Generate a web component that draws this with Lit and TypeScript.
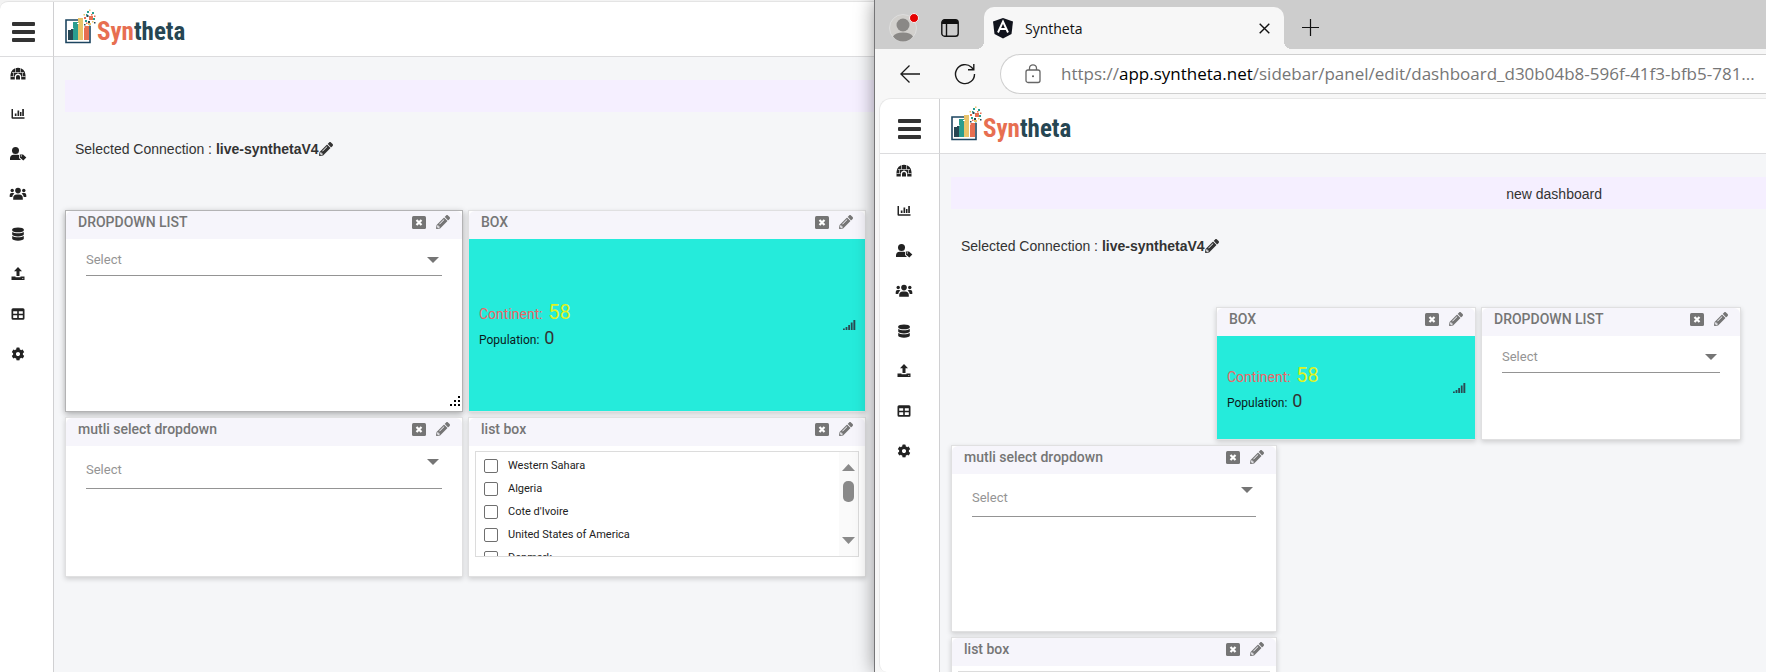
import { LitElement, html, css, svg, nothing } from "lit";
import { customElement, property } from "lit/decorators.js";
import { classMap } from "lit/directives/class-map.js";

type Kind = "dropdown" | "box" | "multi" | "list";

const PENCIL =
  "M497.9 142.1l-46.1 46.1c-4.7 4.7-12.3 4.7-17 0l-111-111c-4.7-4.7-4.7-12.3 0-17l46.1-46.1c18.7-18.7 49.1-18.7 67.9 0l60.1 60.1c18.8 18.7 18.8 49.1 0 67.9zM284.2 99.8L21.6 362.4.4 483.9c-2.9 16.4 11.4 30.6 27.8 27.8l121.5-21.3 262.6-262.6c4.7-4.7 4.7-12.3 0-17l-111-111c-4.8-4.7-12.4-4.7-17.1 0zM124.1 339.9c-5.5-5.5-5.5-14.3 0-19.8l154-154c5.5-5.5 14.3-5.5 19.8 0s5.5 14.3 0 19.8l-154 154c-5.5 5.5-14.3 5.5-19.8 0zM88 424h48v36.3l-64.5 11.3-31.1-31.1L51.7 376H88v48z";

const pencil = (size: number) => html`<svg width=${size} height=${size} viewBox="0 0 512 512" fill="currentColor" aria-hidden="true"><path d=${PENCIL} /></svg>`;

const NAV = [
  {
    name: "Home",
    art: svg`<path d="M1.5 14.5V10A7.2 7 0 0 1 16.500 10V14.500H12.200V12A3.200 3.200 0 0 0 5.800 12V14.500Z"/><path d="M7 14.500V12a2 2 0 0 1 4 0v2.500z"/><g stroke="#fff" stroke-width=".6" fill="none"><path d="M1.500 11.500H5.500M12.500 11.500H16.500M2.800 7.500H15.200M6.500 3v4.500M11.500 3v4.500M9 7.500v1.500M4.500 7.500v4M13.500 7.500v4"/></g>`,
  },
  {
    name: "Charts",
    art: svg`<path d="M2.500 4h1.500v8.300h11.500v1.500h-12a1 1 0 0 1-1-1zM5.800 8.500h1.700v2.500H5.800zM8.500 5.500h1.700V11H8.500zM11 7h1.500v4H11zM13.200 4h1.700v7h-1.700z"/>`,
  },
  {
    name: "User tags",
    art: svg`<circle cx="6.500" cy="5.500" r="3.500"/><path d="M1 15v-1.500A3.800 3.800 0 0 1 4.800 9.700H8.500A3.500 3.500 0 0 1 10 10v3l2 2z"/><path d="M10.800 9.500h3.200l3.300 3-3 3-3.500-3z"/><circle cx="12.300" cy="10.900" r=".6" fill="#fff"/>`,
  },
  {
    name: "Groups",
    art: svg`<circle cx="9" cy="5.600" r="2.800"/><circle cx="3.200" cy="5.500" r="1.700"/><circle cx="14.800" cy="5.500" r="1.700"/><path d="M4.200 14.800v-1.700A3.600 3.600 0 0 1 7.800 9.500h2.400a3.600 3.600 0 0 1 3.600 3.600v1.700zM.700 12V10a1.900 1.900 0 0 1 1.900-1.900h1.500a2 2 0 0 1 1.300.500A5 5 0 0 0 3.200 12zM17.300 12V10a1.900 1.900 0 0 0-1.900-1.900h-1.500a2 2 0 0 0-1.300.500A5 5 0 0 1 14.800 12z"/>`,
  },
  {
    name: "Databases",
    art: svg`<path transform="translate(3.200 2.400) scale(.0259)" d="M448 73.143v45.714C448 159.143 347.667 192 224 192S0 159.143 0 118.857V73.143C0 32.857 100.333 0 224 0s224 32.857 224 73.143zM448 176v102.857C448 319.143 347.667 352 224 352S0 319.143 0 278.857V176c48.125 33.143 136.208 48.572 224 48.572S399.874 209.143 448 176zm0 160v102.857C448 479.143 347.667 512 224 512S0 479.143 0 438.857V336c48.125 33.143 136.208 48.572 224 48.572S399.874 369.143 448 336z"/>`,
  },
  {
    name: "Upload",
    art: svg`<path d="M9 2l4 4.300h-2.500V11h-3V6.300H5z"/><path d="M2.500 11.500h4v.800h5v-.800h4v3.500h-13z"/><circle cx="13.800" cy="13.400" r=".5" fill="#fff"/>`,
  },
  {
    name: "Tables",
    art: svg`<path fill-rule="evenodd" d="M4 3.200h10a1.500 1.500 0 0 1 1.500 1.500v8.600a1.500 1.500 0 0 1-1.500 1.500H4a1.500 1.500 0 0 1-1.500-1.500V4.700A1.500 1.500 0 0 1 4 3.200zM4.200 6.300v2.500h4V6.300zM9.800 6.300v2.500h4V6.300zM4.200 10.300v2.700h4v-2.700zM9.800 10.300v2.700h4v-2.700z"/>`,
  },
  {
    name: "Settings",
    art: svg`<path transform="translate(2.400 2.400) scale(.0258)" d="M487.4 315.7l-42.6-24.6c4.3-23.2 4.3-47 0-70.2l42.6-24.6c4.9-2.8 7.1-8.6 5.5-14-11.1-35.6-30-67.8-54.7-94.6-3.8-4.1-10-5.1-14.8-2.3L380.8 110c-17.9-15.4-38.5-27.3-60.8-35.1V25.8c0-5.6-3.9-10.5-9.4-11.7-36.7-8.2-74.3-7.8-109.2 0-5.5 1.2-9.4 6.1-9.4 11.7V75c-22.2 7.900-42.8 19.8-60.8 35.1L88.700 85.500c-4.9-2.8-11-1.9-14.8 2.3-24.7 26.7-43.6 58.9-54.7 94.6-1.7 5.4.6 11.2 5.5 14L67.300 221c-4.3 23.2-4.3 47 0 70.2l-42.6 24.6c-4.900 2.8-7.1 8.6-5.5 14 11.1 35.600 30 67.8 54.7 94.6 3.8 4.1 10 5.1 14.8 2.3l42.6-24.6c17.9 15.4 38.5 27.3 60.8 35.1v49.2c0 5.6 3.900 10.5 9.4 11.7 36.7 8.2 74.3 7.8 109.2 0 5.5-1.2 9.4-6.1 9.4-11.7v-49.2c22.2-7.9 42.8-19.8 60.8-35.1l42.6 24.6c4.9 2.8 11 1.9 14.8-2.3 24.7-26.7 43.6-58.9 54.7-94.6 1.5-5.5-.7-11.3-5.6-14.1zM256 336c-44.1 0-80-35.9-80-80s35.9-80 80-80 80 35.9 80 80-35.9 80-80 80z"/>`,
  },
];

const COUNTRIES = ["Western Sahara", "Algeria", "Cote d'Ivoire", "United States of America", "Denmark"];

@customElement("widget-card")
class WidgetCard extends LitElement {
  @property() heading = "";
  @property() kind: Kind = "dropdown";
  @property({ type: Boolean }) active = false;

  static styles = css`
    :host {
      display: grid;
      min-width: 0;
      font-family: Roboto, "Liberation Sans", sans-serif;
    }
    * {
      box-sizing: border-box;
    }
    .card {
      position: relative;
      display: flex;
      flex-direction: column;
      min-height: 0;
      background: #fff;
      box-shadow: 0 0 0 1px #e0e0e1, 0 2px 5px 1px rgba(0, 0, 0, 0.17);
    }
    .card.active {
      box-shadow: 0 0 0 1px #b3b3b4, 0 2px 6px 1px rgba(0, 0, 0, 0.32);
    }
    .head {
      display: flex;
      align-items: center;
      flex: none;
      gap: 10px;
      height: 28px;
      padding: 0 12px 6px;
      background: #f6f5fb;
      border-radius: 6px 6px 0 0;
      color: #757575;
    }
    .title {
      flex: 1;
      font-size: 14px;
      line-height: 20px;
      font-weight: 500;
      white-space: nowrap;
    }
    button {
      display: flex;
      padding: 0;
      border: 0;
      background: none;
      color: inherit;
    }
    .field {
      display: grid;
      margin: 0 20px;
    }
    select {
      grid-area: 1 / 1;
      height: 37px;
      padding: 4px 0 0;
      appearance: none;
      border: 0;
      border-bottom: 1px solid #949494;
      border-radius: 0;
      background: none;
      color: #949494;
      font: 13px Roboto, sans-serif;
    }
    .arrow {
      grid-area: 1 / 1;
      place-self: center end;
      margin: 4px 3px 0 0;
      pointer-events: none;
    }
    .multi select {
      height: 43px;
    }
    .multi .arrow {
      align-self: start;
      margin-top: 13px;
    }
    .grip {
      position: absolute;
      right: 2px;
      bottom: 5px;
    }
    .box {
      flex: 1;
      display: flex;
      align-items: center;
      justify-content: space-between;
      padding: 2px 9px 0 10px;
      background: #25ebdb;
      color: #000;
    }
    .line {
      margin: 0;
      font-size: 12px;
      line-height: 24px;
      color: #0b1a1a;
    }
    .num {
      margin-left: 2px;
      font-size: 18px;
      color: #333;
    }
    .first {
      font-size: 14px;
      color: #ec6565;
    }
    .first .num {
      font-size: 20px;
      color: #dff21f;
    }
    .list {
      display: grid;
      grid-template-columns: 1fr 19px;
      height: 106px;
      margin: 5px 6px 0;
      border: 1px solid #dcdcdc;
      overflow: hidden;
    }
    .items {
      margin: 0;
      padding: 2px 0 0 8px;
      list-style: none;
      min-height: 0;
    }
    .item {
      display: flex;
      align-items: center;
      gap: 10px;
      height: 23px;
      font-size: 11px;
      color: #222;
    }
    .item input {
      width: 14px;
      height: 14px;
      margin: 0;
      appearance: none;
      border: 1px solid #6f6f6f;
      border-radius: 2px;
      background: #fff;
    }
    .scroll {
      display: flex;
      flex-direction: column;
      align-items: center;
      padding: 12px 0;
      background: #fafafa;
    }
    .thumb {
      width: 11px;
      height: 21px;
      margin: 10px 0 auto;
      border-radius: 5px;
      background: #8a8a8a;
    }
  `;

  private body() {
    switch (this.kind) {
      case "box":
        return html`<div class="box">
          <div>
            <p class="line first">Continent: <span class="num">58</span></p>
            <p class="line">Population: <span class="num">0</span></p>
          </div>
          <svg width="13" height="14" viewBox="0 0 13 14" fill="#2a4a52" aria-hidden="true">
            <path d="M0 9.500h1.800V11H0zM2.600 8h1.800v3H2.600zM5.200 6H7v5H5.200zM7.800 3.500h1.800V11H7.800zM10.400 1h1.900v10h-1.900z" />
          </svg>
        </div>`;
      case "list":
        return html`<div class="list">
          <ul class="items">
            ${COUNTRIES.map(
              (c, i) => html`<li class="item"><input type="checkbox" id="c${i}" /><label for="c${i}">${c}</label></li>`
            )}
          </ul>
          <div class="scroll" aria-hidden="true">
            <svg width="13" height="7"><path d="M0 7L6.500 0 13 7z" fill="#8a8a8a" /></svg>
            <div class="thumb"></div>
            <svg width="13" height="7"><path d="M0 0L6.500 7 13 0z" fill="#8a8a8a" /></svg>
          </div>
        </div>`;
      default:
        return html`<div class=${classMap({ field: true, multi: this.kind === "multi" })}>
          <select id="pick"><option>Select</option></select>
          <svg class="arrow" width="12" height="6" aria-hidden="true"><path d="M0 0H12L6 6z" fill="#757575" /></svg>
        </div>`;
    }
  }

  render() {
    const picks = this.kind === "dropdown" || this.kind === "multi";
    return html`<section class=${classMap({ card: true, active: this.active })}>
      <div class="head">
        ${picks
          ? html`<label class="title" for="pick">${this.heading}</label>`
          : html`<span class="title">${this.heading}</span>`}
        <button aria-label="Remove widget">
          <svg width="14" height="13" viewBox="0 0 14 13" aria-hidden="true">
            <rect width="14" height="13" rx="1.500" fill="currentColor" />
            <path d="M4.500 4l5 5M9.500 4l-5 5" stroke="#fff" stroke-width="2.200" />
          </svg>
        </button>
        <button aria-label="Edit widget">${pencil(14)}</button>
      </div>
      ${this.body()}
      ${this.active
        ? html`<svg class="grip" width="10" height="10" aria-hidden="true">
            <path d="M8 0h2v2H8zM4 4h2v2H4zM8 4h2v2H8zM0 8h2v2H0zM4 8h2v2H4zM8 8h2v2H8z" />
          </svg>`
        : nothing}
    </section>`;
  }
}

@customElement("dashboard-page")
class DashboardPage extends LitElement {
  @property() banner = "";

  static styles = css`
    :host {
      --inset: 15px;
      display: grid;
      grid-template-columns: auto 1fr;
      grid-template-rows: 55px 1fr;
      min-height: 0;
      overflow: hidden;
      background: #fff;
      color: #333;
      font-family: "Liberation Sans", Arial, sans-serif;
      font-size: 14px;
    }
    :host([cut]) {
      --inset: 9px;
    }
    * {
      box-sizing: border-box;
    }
    button {
      display: flex;
      padding: 0;
      border: 0;
      background: none;
      color: inherit;
    }
    .menu,
    .nav {
      border-right: 1px solid #d0d0d2;
      padding: 0 26px 0 var(--inset);
    }
    .menu,
    .top {
      border-bottom: 1px solid #dcdcde;
    }
    .menu {
      display: flex;
      align-items: center;
      padding: 7px 18px 0 calc(var(--inset) + 3px);
    }
    .top {
      display: flex;
      align-items: start;
      padding: 7px 12px 0 11px;
    }
    .brand {
      display: flex;
      align-items: start;
      text-decoration: none;
      color: #264653;
      gap: 1px;
    }
    .word {
      padding-top: 8px;
      font-family: "Roboto Condensed", "Liberation Sans", sans-serif;
      font-weight: 700;
      font-size: 25px;
      line-height: 30px;
    }
    .warm {
      color: #e76f51;
    }
    .nav {
      display: flex;
      flex-direction: column;
      align-items: start;
      gap: 22px;
      padding-top: 8px;
    }
    .nav a {
      display: flex;
      color: #222;
    }
    .main {
      display: flex;
      flex-direction: column;
      min-width: 0;
      min-height: 0;
      padding: 23px 0 0 11px;
      background: #f5f6f8;
      overflow: hidden;
    }
    .banner {
      flex: none;
      width: 148%;
      height: 32px;
      background: #f5efff;
      text-align: center;
      line-height: 34px;
    }
    .conn {
      display: flex;
      align-items: center;
      flex: none;
      height: 18px;
      margin: 28px 0 53px 10px;
      white-space: pre;
    }
  `;

  render() {
    return html`
      <div class="menu">
        <button aria-label="Toggle menu">
          <svg width="23" height="21" viewBox="0 0 23 21" fill="#333" aria-hidden="true">
            <rect width="23" height="4" rx="1" /><rect y="8" width="23" height="4" rx="1" /><rect y="16" width="23" height="4" rx="1" />
          </svg>
        </button>
      </div>
      <header class="top">
        <a class="brand" href="#">
          <svg width="31" height="35" viewBox="0 0 31 35" aria-hidden="true">
            <path d="M13 11H1v22.500h24V17" fill="none" stroke="#1d4560" stroke-width="1.600" />
            <path d="M3 21h3v-1h2v11H3z" fill="#264653" />
            <path d="M8 13h5v18H8z" fill="#2a9d8f" />
            <path d="M13 9h5v22h-5z" fill="#e9c46a" />
            <path d="M19 17h5v14h-5z" fill="#e76f51" />
            <path d="M6.500 19.500h2M12 14.500h2M18 18h2" stroke="#fff" />
            <g fill="#2a9d8f"><path d="M22 2h2v2h-2zM27 3h2v2h-2zM20 11h2v2h-2zM28 9h2v2h-2zM21 5h1.500v1.500H21zM24 15h1.500v1.500H24z" /></g>
            <g fill="#e76f51"><path d="M24 7h4v4h-4zM19 8h2v2h-2zM21 13.500h1.500V15H21zM26 5h1.500v1.500H26zM29 6.500h1.500V8H29z" /></g>
            <g fill="#264653"><path d="M21.500 6h2v2h-2zM23 12h2v2h-2zM19 15h1.500v1.500H19zM29 13h1.500v1.500H29z" /></g>
            <g fill="#e9c46a"><path d="M24 .500h1.500V2H24zM23 14h3v2h-3zM27 12h1.500v1.500H27zM18.500 5h1.500v1.500h-1.500z" /></g>
          </svg>
          <span class="word"><span class="warm">Syn</span>theta</span>
        </a>
      </header>
      <nav class="nav">
        ${NAV.map(
          (n) => html`<a href="#" aria-label=${n.name}><svg width="18" height="18" viewBox="0 0 18 18" fill="currentColor" aria-hidden="true">${n.art}</svg></a>`
        )}
      </nav>
      <main class="main">
        <div class="banner">${this.banner}</div>
        <div class="conn">Selected Connection : <b>live-synthetaV4</b><button aria-label="Edit connection">${pencil(14)}</button></div>
        <slot></slot>
      </main>
    `;
  }
}

@customElement("app-root")
class AppRoot extends LitElement {
  static styles = css`
    :host {
      display: grid;
      grid-template-columns: 874fr 892fr;
      height: 100vh;
      overflow: hidden;
      background: #f5f6f8;
      font-family: "Open Sans", sans-serif;
    }
    * {
      box-sizing: border-box;
    }
    button {
      display: flex;
      padding: 0;
      border: 0;
      background: none;
      color: inherit;
    }
    .back {
      display: grid;
      min-width: 0;
      min-height: 0;
      padding-top: 1px;
      background: #f3f3f3;
    }
    .back dashboard-page {
      border-top: 1px solid #e4e4e4;
      border-radius: 8px 0 0 0;
    }
    .front {
      position: relative;
      display: grid;
      grid-template-rows: 49px 49px 1fr;
      min-width: 0;
      min-height: 0;
      border-left: 1px solid #757577;
      background: #f7f7f7;
      box-shadow: 0 0 18px rgba(0, 0, 0, 0.4);
    }
    .front dashboard-page {
      margin-left: 4px;
      border: solid #e8e8e8;
      border-width: 1px 0 0 1px;
      border-radius: 12px 0 0 8px;
    }
    .tabs {
      display: flex;
      align-items: center;
      padding: 7px 0 0 13px;
      background: #cdcdcd;
    }
    .tabs > button {
      margin-bottom: 1px;
    }
    .spaces {
      margin: 0 25px 0 22px;
    }
    .tab {
      display: flex;
      align-items: center;
      align-self: stretch;
      width: 300px;
      margin-right: 18px;
      padding: 0 14px 0 9px;
      border-radius: 10px 10px 0 0;
      background: #f7f7f7;
      color: #111;
      font-size: 14px;
      position: relative;
    }
    .tab::before,
    .tab::after {
      content: "";
      position: absolute;
      bottom: 0;
      width: 8px;
      height: 8px;
    }
    .tab::before {
      right: 100%;
      background: radial-gradient(circle at 0 0, #cdcdcd 8px, #f7f7f7 8px);
    }
    .tab::after {
      left: 100%;
      background: radial-gradient(circle at 100% 0, #cdcdcd 8px, #f7f7f7 8px);
    }
    .name {
      flex: 1;
      margin-left: 12px;
    }
    .tools {
      display: flex;
      align-items: center;
      gap: 34px;
      padding-left: 25px;
    }
    .pill {
      flex: 1;
      display: flex;
      align-items: center;
      gap: 20px;
      min-width: 0;
      height: 40px;
      margin-left: -10px;
      padding-left: 24px;
      border: 1px solid #cfcfcf;
      border-right: 0;
      border-radius: 20px 0 0 20px;
      background: #fff;
    }
    .url {
      color: #767676;
      font: 17px "Open Sans", sans-serif;
      white-space: nowrap;
    }
    .host {
      color: #000;
    }
    .grid {
      display: grid;
      gap: 7px;
      padding: 0 9px 0 1px;
    }
    .pair {
      grid-template-columns: 1fr 1fr;
      grid-template-rows: 200px 158px;
    }
    .spread {
      grid-template-columns: 258fr 59fr 192fr 258fr;
      grid-template-rows: 131px 185px 158px;
      padding-right: 26px;
    }
    .third {
      grid-column: 2 / 4;
    }
    .wide {
      grid-column: 1 / 3;
    }
  `;

  render() {
    return html`
      <div class="back">
        <dashboard-page cut>
          <div class="grid pair">
            <widget-card heading="DROPDOWN LIST" kind="dropdown" active></widget-card>
            <widget-card heading="BOX" kind="box"></widget-card>
            <widget-card heading="mutli select dropdown" kind="multi"></widget-card>
            <widget-card heading="list box" kind="list"></widget-card>
          </div>
        </dashboard-page>
      </div>
      <div class="front">
        <div class="tabs">
          <button aria-label="Profile">
            <svg width="31" height="30" viewBox="0 0 31 30" aria-hidden="true">
              <circle cx="15" cy="15" r="13.500" fill="#d2d0cd" stroke="#dedede" />
              <circle cx="15" cy="12" r="6.500" fill="#8a8886" />
              <path d="M5 23.500Q7.500 19.500 15 19.500T25 23.500Q21 28.500 15 28.500T5 23.500z" fill="#8a8886" />
              <circle cx="26" cy="5" r="4.500" fill="#e60000" stroke="#f4f4f4" />
            </svg>
          </button>
          <button class="spaces" aria-label="Workspaces">
            <svg width="18" height="18" viewBox="0 0 18 18" aria-hidden="true">
              <rect x=".8" y=".8" width="16.400" height="16.400" rx="2.800" fill="none" stroke="#111" stroke-width="1.400" />
              <path d="M1 5V3Q1 1 3 1H15Q17 1 17 3V5z" fill="#111" />
              <path d="M5.500 4v13" stroke="#111" stroke-width="1.400" />
            </svg>
          </button>
          <div class="tab">
            <svg width="20" height="21" viewBox="0 0 20 21" aria-hidden="true">
              <path d="M10 0L20 3.500 18.500 16 10 20.500 1.500 16 0 3.500z" fill="#10131c" />
              <path d="M5 14.500L10 3.500 15 14.500M6.800 11h6.400" fill="none" stroke="#fff" stroke-width="1.900" />
            </svg>
            <span class="name">Syntheta</span>
            <button aria-label="Close tab">
              <svg width="11" height="11" viewBox="0 0 11 11" aria-hidden="true"><path d="M.700.700l9.600 9.600M10.300.700L.700 10.300" stroke="#111" stroke-width="1.400" /></svg>
            </button>
          </div>
          <button aria-label="New tab">
            <svg width="17" height="17" viewBox="0 0 17 17" aria-hidden="true"><path d="M8.500 0v17M0 8.500h17" stroke="#111" stroke-width="1.200" /></svg>
          </button>
        </div>
        <div class="tools">
          <button aria-label="Back">
            <svg width="20" height="18" viewBox="0 0 20 18" fill="none" stroke="#1a1a1a" stroke-width="1.300" aria-hidden="true"><path d="M20 9H1M9.500 .5L.9 9l8.600 8.500" /></svg>
          </button>
          <button aria-label="Refresh">
            <svg width="22" height="22" viewBox="0 0 22 22" fill="none" stroke="#1a1a1a" stroke-width="1.400" aria-hidden="true"><path d="M20.500 11A9.500 9.500 0 1 1 17.500 4.200L19.500 6.500M19.800 1v5.800H14" /></svg>
          </button>
          <div class="pill">
            <svg width="16" height="20" viewBox="0 0 16 20" fill="none" stroke="#666" stroke-width="1.300" aria-hidden="true">
              <rect x="1" y="6" width="14" height="12.500" rx="2" /><path d="M4.500 6V4.300a3.500 3.500 0 0 1 7 0V6" /><circle cx="8" cy="12.200" r="1" fill="#555" stroke="none" />
            </svg>
            <div class="url" role="textbox" aria-label="Address" contenteditable="true">https://<span class="host">app.syntheta.net</span>/sidebar/panel/edit/dashboard_d30b04b8-596f-41f3-bfb5-781...</div>
          </div>
        </div>
        <dashboard-page banner="new dashboard">
          <div class="grid spread">
            <widget-card class="third" heading="BOX" kind="box"></widget-card>
            <widget-card heading="DROPDOWN LIST" kind="dropdown"></widget-card>
            <widget-card class="wide" heading="mutli select dropdown" kind="multi"></widget-card>
            <widget-card class="wide" heading="list box" kind="list"></widget-card>
          </div>
        </dashboard-page>
      </div>
    `;
  }
}
